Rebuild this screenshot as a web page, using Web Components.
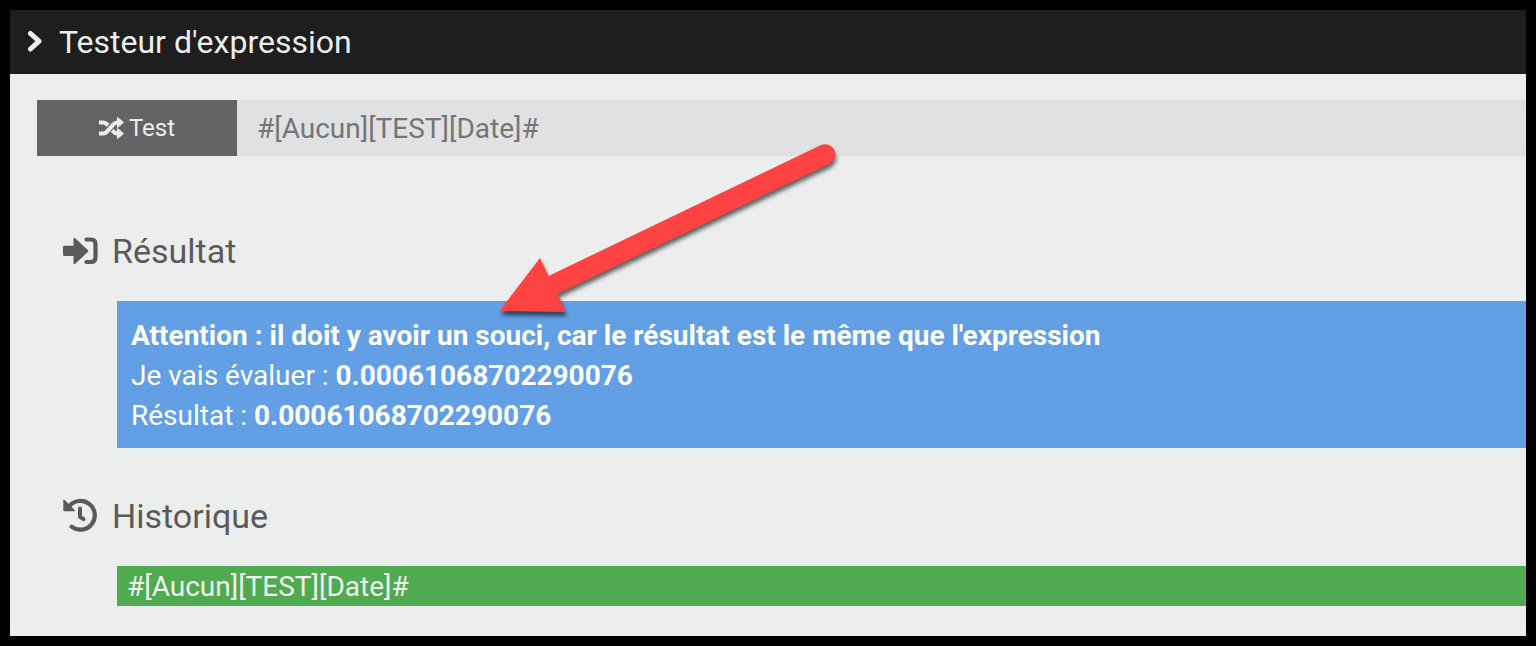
<!DOCTYPE html>
<html lang="fr">
<head>
<meta charset="utf-8">
<meta name="viewport" content="width=device-width, initial-scale=1">
<title>Testeur d'expression</title>
<style>
  body { margin: 0; background: #000; font-family: Roboto, "Liberation Sans", sans-serif; }
</style>
</head>
<body>
<expression-tester>
  <title-bar slot="header">Testeur d'expression</title-bar>
  <test-form value="#[Aucun][TEST][Date]#"></test-form>
  <result-section icon="enter">
    <span slot="title">Résultat</span>
    <message-box kind="info">
      <div><b>Attention : il doit y avoir un souci, car le résultat est le même que l'expression</b></div>
      <div>Je vais évaluer : <b>0.00061068702290076</b></div>
      <div>Résultat : <b>0.00061068702290076</b></div>
    </message-box>
  </result-section>
  <result-section icon="history">
    <span slot="title">Historique</span>
    <message-box kind="entry">#[Aucun][TEST][Date]#</message-box>
  </result-section>
  <pointer-arrow slot="overlay"></pointer-arrow>
</expression-tester>

<script>
const define = (name, markup, setup) => {
  customElements.define(name, class extends HTMLElement {
    constructor() {
      super();
      this.attachShadow({ mode: "open" }).innerHTML = markup;
    }
    connectedCallback() { if (setup) setup(this, this.shadowRoot); }
  });
};

define("expression-tester", `
  <style>
    :host { display: block; position: relative; padding: 10px; }
    main { display: flex; flex-direction: column; gap: 48px; padding: 26px 0 30px 27px; background: #eceeed; }
  </style>
  <slot name="header"></slot>
  <main><slot></slot></main>
  <slot name="overlay"></slot>`);

define("title-bar", `
  <style>
    :host { display: block; background: #1e1e1e; color: #eceeed; }
    header { display: flex; align-items: center; gap: 15px; height: 64px; padding: 0 16px; }
    h1 { margin: 0; font-size: 32px; line-height: 40px; font-weight: 400; }
  </style>
  <header>
    <svg width="18" height="24" viewBox="0 0 18 24" aria-hidden="true">
      <path d="M4.500 3.500 13 11.200l-8.500 7.800" fill="none" stroke="currentColor" stroke-width="5" stroke-linecap="round" stroke-linejoin="round"/>
    </svg>
    <h1><slot></slot></h1>
  </header>`);

define("test-form", `
  <style>
    :host { display: block; margin-bottom: 27px; }
    form { display: flex; height: 56px; margin: 0; }
    button { display: flex; flex: none; align-items: center; justify-content: center; gap: 4px; width: 200px;
      border: 0; padding: 0; background: #646464; color: #eceeed; font: 400 24px/32px Roboto, sans-serif; }
    input { flex: 1; min-width: 0; border: 0; border-radius: 0; padding: 2px 20px 0; outline: 0;
      background: #e0e1e2; color: #757575; font: 400 28px/40px Roboto, sans-serif; }
  </style>
  <form onsubmit="return false">
    <button type="submit">
      <svg width="26" height="24" viewBox="0 0 26 24" aria-hidden="true">
        <g fill="none" stroke="currentColor" stroke-width="4.200" stroke-linejoin="round">
          <path d="M0 6.500h4c2 0 3 .800 4.200 2.200l6 6.600c1.200 1.400 2.200 2.200 4.200 2.200h1.500"/>
          <path stroke="#646464" stroke-width="6.500" d="M7.500 15.500l7.500-7.500"/>
          <path d="M0 17.500h4c2 0 3-.800 4.200-2.200l6-6.600c1.200-1.400 2.200-2.200 4.200-2.200h1.500"/>
        </g>
        <path fill="currentColor" stroke="currentColor" stroke-linejoin="round" d="M18.500 1.500v10l6-5zM18.500 12.500v10l6-5z"/>
      </svg>
      <span>Test</span>
    </button>
    <input type="text" aria-label="Expression" spellcheck="false">
  </form>`, (host, root) => {
    root.querySelector("input").value = host.getAttribute("value") || "";
  });

const ICONS = {
  enter: `
    <path fill="currentColor" d="M2 14q0-1.200 1.200-1.200h9.300V6q0-2 1.700-.700L26.800 17q1.200 1 0 2L14.200 30.700q-1.700 1.300-1.700-.700v-7H3.200Q2 23 2 21.800z"/>
    <path fill="none" stroke="currentColor" stroke-width="4.200" stroke-linecap="round" d="M25.500 6.500h4.500q4.500 0 4.500 4.500v13.500q0 4.500-4.500 4.500h-4.500"/>`,
  history: `
    <path fill="none" stroke="currentColor" stroke-width="4.200" stroke-linecap="round" d="M8 8.500A14.400 14.400 0 1 1 10.600 28.700"/>
    <path fill="currentColor" d="M2.300 2.600q0-1.800 1.300-.600L13.600 12q.900 1.300-.600 1.300H3.300q-1 0-1-1z"/>
    <path fill="none" stroke="currentColor" stroke-width="4" stroke-linecap="round" stroke-linejoin="round" d="M19 10.500v8.300l3.500 2.300"/>`
};

define("result-section", `
  <style>
    :host { display: block; }
    h2 { display: flex; align-items: center; gap: 13px; margin: 0 0 30px; padding-left: 24px;
      color: #5a5a5a; font-size: 34px; line-height: 40px; font-weight: 400; }
    .body { margin-left: 80px; }
  </style>
  <section>
    <h2><svg width="38" height="36" viewBox="0 0 38 36" aria-hidden="true"></svg><slot name="title"></slot></h2>
    <div class="body"><slot></slot></div>
  </section>`, (host, root) => {
    root.querySelector("svg").innerHTML = ICONS[host.getAttribute("icon")];
  });

define("message-box", `
  <style>
    :host { display: block; font-size: 28px; line-height: 40px; }
    :host([kind="info"]) { padding: 15px 14px 12px; background: #629fe5; color: #fff; }
    :host([kind="entry"]) { padding: 2px 10px 0; line-height: 38px; background: #50aa50; color: #f0f3ee; }
  </style>
  <slot></slot>`);

define("pointer-arrow", `
  <style>
    :host { position: absolute; left: 490px; top: 134px; pointer-events: none; }
    svg { display: block; filter: drop-shadow(1px 4px 2px rgba(0, 0, 0, .6)); }
  </style>
  <svg width="360" height="190" viewBox="490 134 360 190" aria-hidden="true">
    <path fill="#ff4242" d="M499.500 311 540 258l8.500 18L820.500 145.200a10.200 10.200 0 0 1 9 18.500L557.500 294l8.500 18z"/>
  </svg>`);
</script>
</body>
</html>
